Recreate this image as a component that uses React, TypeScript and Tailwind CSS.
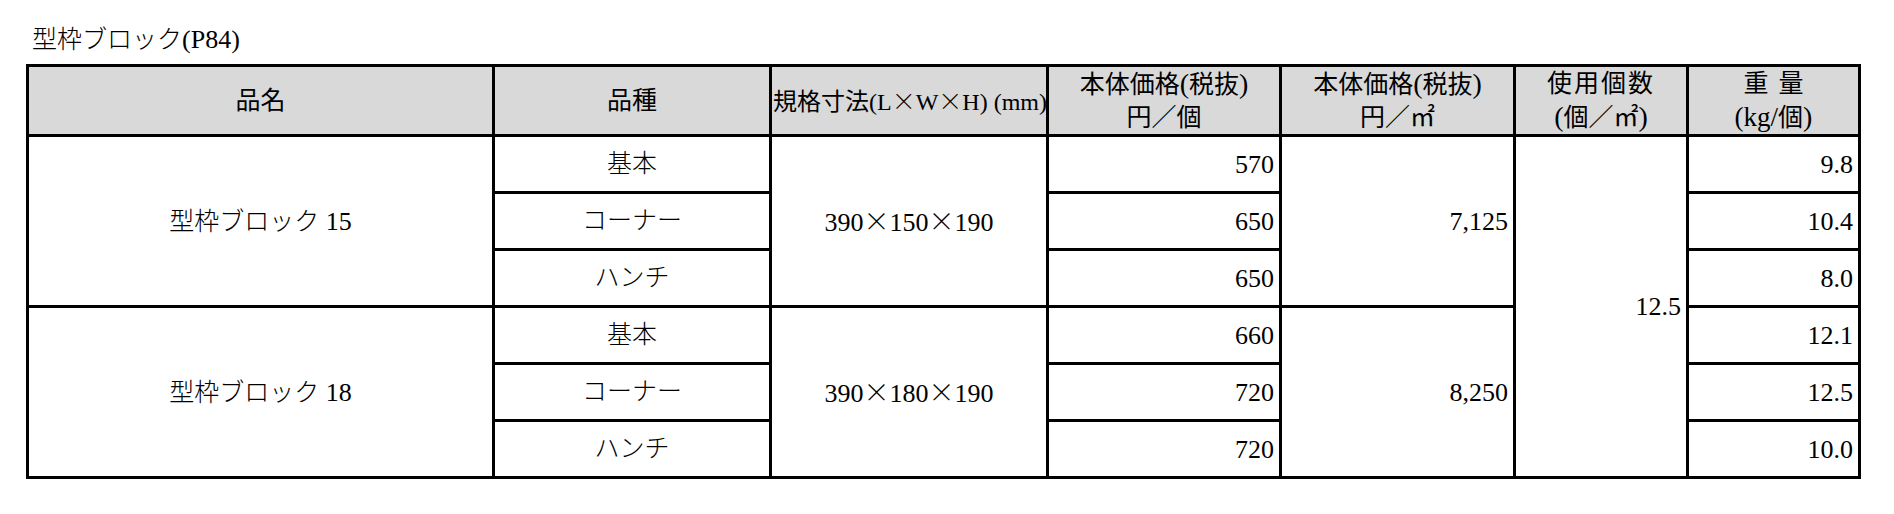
import React from "react";

const X = () => <span className="font-['Noto_Sans_CJK_JP'] font-light">×</span>;

const cell = "border-[3px] border-black p-0";
const th = `${cell} bg-[#d9d9d9] font-normal text-center align-middle leading-[33px]`;
const num = "text-[26px] text-right pr-[5px]";
const P = ({ children }: { children: React.ReactNode }) => <span className="text-[28px]">{children}</span>;

export default function App() {
  return (
    <div className="w-[1894px] h-[514px] bg-white text-black font-['Liberation_Serif','Noto_Sans_CJK_JP',serif] text-[25px] font-light">
      <div className="pl-[32px] pt-[24px] leading-[32px] h-[64px]">
        型枠ブロック<span className="text-[26px]">(P84)</span>
      </div>
      <table className="ml-[26px] border-collapse table-fixed w-[1832px]">
        <colgroup>
          <col className="w-[466px]" />
          <col className="w-[277px]" />
          <col className="w-[277px]" />
          <col className="w-[233px]" />
          <col className="w-[234px]" />
          <col className="w-[173px]" />
          <col className="w-[172px]" />
        </colgroup>
        <thead>
          <tr className="h-[68px]">
            <th className={th}>品名</th>
            <th className={th}>品種</th>
            <th className={`${th} !text-left whitespace-nowrap overflow-hidden text-[24px]`}>
              <span className="pl-[1px]">規格寸法(L<X />W<X />H) (mm)</span>
            </th>
            <th className={th}>
              本体価格<P>(</P>税抜<P>)</P>
              <br />
              円／個
            </th>
            <th className={th}>
              本体価格<P>(</P>税抜<P>)</P>
              <br />
              円／㎡
            </th>
            <th className={th}>
              <span className="tracking-[2px]">使用個数</span>
              <br />
              <P>(</P>個／㎡<P>)</P>
            </th>
            <th className={th}>
              <span className="tracking-[10px] pl-[10px]">重量</span>
              <br />
              <span className="text-[27px]">(kg/</span>個<P>)</P>
            </th>
          </tr>
        </thead>
        <tbody>
          <tr className="h-[57px]">
            <td rowSpan={3} className={`${cell} text-center align-middle`}>
              型枠ブロック <span className="text-[26px]">15</span>
            </td>
            <td className={`${cell} text-center`}>基本</td>
            <td rowSpan={3} className={`${cell} text-center text-[26px]`}>
              390<X />150<X />190
            </td>
            <td className={`${cell} ${num}`}>570</td>
            <td rowSpan={3} className={`${cell} ${num}`}>7,125</td>
            <td rowSpan={6} className={`${cell} ${num}`}>12.5</td>
            <td className={`${cell} ${num}`}>9.8</td>
          </tr>
          <tr className="h-[57px]">
            <td className={`${cell} text-center`}>コーナー</td>
            <td className={`${cell} ${num}`}>650</td>
            <td className={`${cell} ${num}`}>10.4</td>
          </tr>
          <tr className="h-[57px]">
            <td className={`${cell} text-center`}>ハンチ</td>
            <td className={`${cell} ${num}`}>650</td>
            <td className={`${cell} ${num}`}>8.0</td>
          </tr>
          <tr className="h-[57px]">
            <td rowSpan={3} className={`${cell} text-center align-middle`}>
              型枠ブロック <span className="text-[26px]">18</span>
            </td>
            <td className={`${cell} text-center`}>基本</td>
            <td rowSpan={3} className={`${cell} text-center text-[26px]`}>
              390<X />180<X />190
            </td>
            <td className={`${cell} ${num}`}>660</td>
            <td rowSpan={3} className={`${cell} ${num}`}>8,250</td>
            <td className={`${cell} ${num}`}>12.1</td>
          </tr>
          <tr className="h-[57px]">
            <td className={`${cell} text-center`}>コーナー</td>
            <td className={`${cell} ${num}`}>720</td>
            <td className={`${cell} ${num}`}>12.5</td>
          </tr>
          <tr className="h-[57px]">
            <td className={`${cell} text-center`}>ハンチ</td>
            <td className={`${cell} ${num}`}>720</td>
            <td className={`${cell} ${num}`}>10.0</td>
          </tr>
        </tbody>
      </table>
    </div>
  );
}
